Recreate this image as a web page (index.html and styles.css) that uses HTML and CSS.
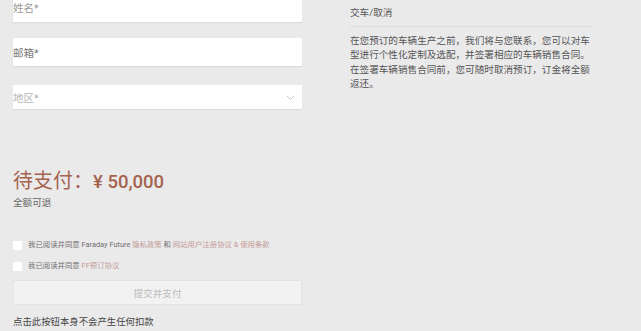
FILE: index.html
```html
<!DOCTYPE html>
<html lang="zh-CN">
<head>
    <meta charset="UTF-8">
    <meta name="viewport" content="width=device-width, initial-scale=1.0">
    <title>订单支付</title>
    <link rel="stylesheet" href="styles.css">
</head>
<body>

    <div class="page">
        <!-- 左侧：表单和支付 -->
        <div class="form-col">
            <div class="field field-first"><span class="ph ph-light">姓名*</span></div>
            <div class="field field-mail"><span class="ph ph-dark">邮箱*</span></div>
            <div class="field field-select">
                <span class="ph ph-lighter">地区*</span>
                <svg class="chevron" width="9" height="6" viewBox="0 0 9 6">
                    <polyline points="1,1 4.5,4.5 8,1" fill="none" stroke="#c8c8c8" stroke-width="1"/>
                </svg>
            </div>

            <div class="price">待支付：<span class="amount">¥ 50,000</span></div>
            <div class="refund">全额可退</div>

            <label class="agree agree-first">
                <span class="box"></span>
                <span>我已阅读并同意 Faraday Future <a>隐私政策</a> 和 <a>网站用户注册协议 &amp; 使用条款</a></span>
            </label>
            <label class="agree">
                <span class="box"></span>
                <span>我已阅读并同意 <a>FF预订协议</a></span>
            </label>

            <button class="submit">提交并支付</button>
            <div class="note">点击此按钮本身不会产生任何扣款</div>
        </div>

        <!-- 右侧：说明 -->
        <div class="info-col">
            <div class="info-title">交车/取消</div>
            <p class="info-text">在您预订的车辆生产之前，我们将与您联系，您可以对车<br>型进行个性化定制及选配，并签署相应的车辆销售合同。<br>在签署车辆销售合同前，您可随时取消预订，订金将全额<br>返还。</p>
        </div>
    </div>

</body>
</html>
```

FILE: styles.css
```css
/* Grundlayout */
body {
    margin: 0;
    background-color: #ebeaeb;
    font-family: "Roboto", "Noto Sans CJK SC", sans-serif;
    color: #555;
    overflow: hidden;
}

.page {
    display: flex;
    padding-left: 13px;
}

/* Linke Spalte */
.form-col {
    width: 289px;
    margin-top: -6px;
    display: flex;
    flex-direction: column;
}

.field {
    background-color: #fff;
    height: 28px;
    display: flex;
    align-items: center;
    justify-content: space-between;
    box-shadow: 0 1px 1px #dcdcdc;
}

.field-first .ph {
    margin-top: -2px;
}

.field-mail {
    margin-top: 16px;
}

.field-select {
    margin-top: 19px;
    height: 24px;
    padding-right: 7px;
}

.ph {
    font-size: 10.5px;
}

.ph-light {
    color: #9a9a9a;
}

.ph-dark {
    color: #777;
}

.ph-lighter {
    color: #b4b4b4;
}

.chevron {
    margin-top: 2px;
}

/* Betrag */
.price {
    margin-top: 60px;
    font-size: 20px;
    line-height: 24px;
    color: #a5634f;
}

.amount {
    font-size: 18.5px;
    font-weight: 500;
}

.refund {
    margin-top: 2px;
    font-size: 9.6px;
    line-height: 14px;
    color: #666;
}

/* Checkboxen */
.agree {
    display: flex;
    align-items: center;
    gap: 6px;
    font-size: 7.4px;
    line-height: 12px;
    color: #6f6f6f;
}

.agree-first {
    margin-top: 29px;
    margin-bottom: 9px;
}

.agree a {
    color: #c29a96;
}

.box {
    width: 9px;
    height: 9px;
    background-color: #fff;
    flex-shrink: 0;
}

.submit {
    margin-top: 8px;
    height: 25px;
    background-color: #f3f2f3;
    border: 1px solid #e4e3e4;
    color: #bbb;
    font-family: inherit;
    font-size: 9.6px;
    padding: 0;
}

.note {
    margin-top: 10px;
    font-size: 9.4px;
    line-height: 14px;
    color: #444;
}

/* Rechte Spalte */
.info-col {
    width: 242px;
    margin-left: 48px;
}

.info-title {
    margin-top: 6px;
    padding-bottom: 6px;
    font-size: 9.6px;
    line-height: 14px;
    color: #555;
    border-bottom: 1px solid #dcdbdc;
}

.info-text {
    margin: 7px 0 0;
    font-size: 9.6px;
    line-height: 14.4px;
    color: #555;
    white-space: nowrap;
}
```
